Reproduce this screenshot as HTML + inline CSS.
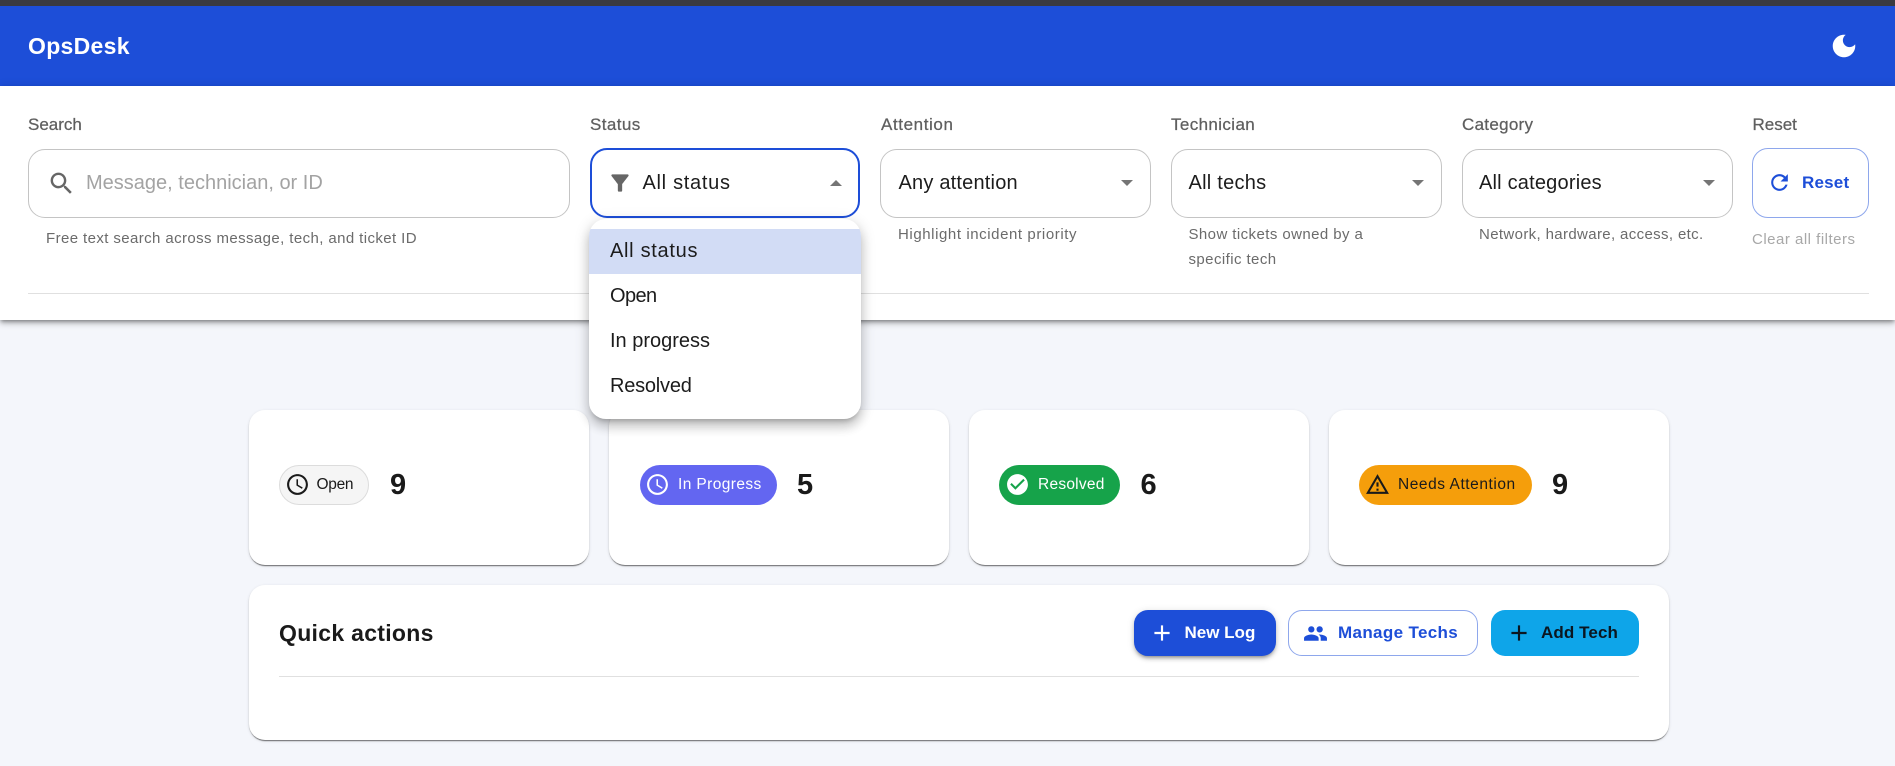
<!DOCTYPE html>
<html lang="en">
<head>
<meta charset="utf-8">
<title>OpsDesk</title>
<style>
html,body{margin:0;padding:0;width:1895px;height:766px;overflow:hidden;background:#f4f6fb;font-family:"Liberation Sans",Arial,sans-serif;color:#1a1a1a}
.a{position:absolute}
.t{position:absolute;white-space:nowrap;line-height:30px;height:30px}
svg{position:absolute;display:block}
.lab{font-size:17px;color:#5f5f5f;-webkit-text-stroke:.25px #5f5f5f}
.val{font-size:20px;color:#1c1c1c}
.hint{font-size:15px;color:#6b6b6b;letter-spacing:.4px}
.inp{position:absolute;top:149px;height:67px;border:1px solid #c4c4c4;border-radius:17px;background:#fff}
.arr{position:absolute;width:0;height:0;border-left:6px solid transparent;border-right:6px solid transparent}
.card{position:absolute;background:#fff;border-radius:16px;box-shadow:0 2px 1px -1px rgba(0,0,0,.38),0 1px 1px rgba(0,0,0,.2),0 1px 3px rgba(0,0,0,.12)}
.chip{position:absolute;top:465px;height:40px;border-radius:20px;box-sizing:border-box}
.chipt{font-size:15.5px}
.num{font-size:29px;font-weight:bold;color:#1a1a1a}
.btn{position:absolute;top:610px;height:46px;border-radius:14px;box-sizing:border-box}
.bt{font-size:17px;font-weight:bold}
.item{position:absolute;left:0;width:272px;height:45px;line-height:45px;font-size:20px;padding-left:21px;box-sizing:border-box;color:#1c1c1c}
</style>
</head>
<body>
<div class="a" style="left:0;top:0;width:1895px;height:6px;background:#3a3a40"></div>
<div class="a" style="left:0;top:6px;width:1895px;height:80px;background:#1d4ed8"></div>
<div class="t" style="left:28px;top:31px;font-size:23px;font-weight:bold;color:#fff;letter-spacing:.3px">OpsDesk</div>
<svg style="left:1829px;top:30.5px" width="30" height="30" viewBox="0 0 24 24" fill="#fff"><path d="M12 3c-4.97 0-9 4.03-9 9s4.03 9 9 9 9-4.03 9-9c0-.46-.04-.92-.1-1.36-.98 1.37-2.58 2.26-4.4 2.26-2.98 0-5.4-2.42-5.4-5.4 0-1.81.89-3.42 2.26-4.4-.44-.06-.9-.1-1.36-.1z"/></svg>

<!-- filter panel -->
<div class="a" style="left:0;top:86px;width:1895px;height:234px;background:#fff;box-shadow:0 2px 4px -1px rgba(0,0,0,.4),0 4px 5px rgba(0,0,0,.14),0 1px 10px rgba(0,0,0,.12)"></div>
<div class="a" style="left:28px;top:293px;width:1841px;height:1px;background:#e0e0e0"></div>

<div class="t lab" style="left:28px;top:110px">Search</div>
<div class="t lab" style="left:590px;top:110px;letter-spacing:.4px">Status</div>
<div class="t lab" style="left:881px;top:110px;letter-spacing:.6px">Attention</div>
<div class="t lab" style="left:1171px;top:110px;letter-spacing:.38px">Technician</div>
<div class="t lab" style="left:1462px;top:110px;letter-spacing:.29px">Category</div>
<div class="t lab" style="left:1752.5px;top:110px">Reset</div>

<div class="inp" style="left:28px;width:540px"></div>
<svg style="left:47px;top:168.5px" width="29" height="29" viewBox="0 0 24 24" fill="#666"><path d="M15.5 14h-.79l-.28-.27C15.41 12.59 16 11.11 16 9.5 16 5.91 13.09 3 9.5 3S3 5.91 3 9.5 5.91 16 9.5 16c1.61 0 3.09-.59 4.23-1.57l.27.28v.79l5 4.99L20.49 19l-4.99-5zm-6 0C7.01 14 5 11.99 5 9.5S7.01 5 9.5 5 14 7.01 14 9.5 11.99 14 9.5 14z"/></svg>
<div class="t val" style="left:86px;top:168px;color:#a3a3a3">Message, technician, or ID</div>
<div class="t hint" style="left:46px;top:224px">Free text search across message, tech, and ticket ID</div>

<div class="a" style="left:590px;top:148px;width:266px;height:66px;border:2px solid #1d4ed8;border-radius:17px;background:#fff"></div>
<svg style="left:607px;top:169.5px" width="26" height="26" viewBox="0 0 24 24" fill="#666"><path d="M4.25 5.61C6.27 8.2 10 13 10 13v6c0 .55.45 1 1 1h2c.55 0 1-.45 1-1v-6s3.72-4.8 5.74-7.39c.51-.66.04-1.61-.79-1.61H5.04c-.83 0-1.3.95-.79 1.61z"/></svg>
<div class="t val" style="left:642.5px;top:168px;letter-spacing:.7px">All status</div>
<div class="arr" style="left:830px;top:179.5px;border-bottom:6.5px solid #757575"></div>

<div class="inp" style="left:880px;width:269px"></div>
<div class="t val" style="left:898.5px;top:168px;letter-spacing:.2px">Any attention</div>
<div class="arr" style="left:1121px;top:180px;border-top:6.5px solid #757575"></div>
<div class="t hint" style="left:898px;top:220px;letter-spacing:.58px">Highlight incident priority</div>

<div class="inp" style="left:1171px;width:269px"></div>
<div class="t val" style="left:1188.5px;top:168px;letter-spacing:.25px">All techs</div>
<div class="arr" style="left:1412px;top:180px;border-top:6.5px solid #757575"></div>
<div class="t hint" style="left:1188.5px;top:220px;letter-spacing:.42px">Show tickets owned by a</div>
<div class="t hint" style="left:1188.5px;top:245px;letter-spacing:.42px">specific tech</div>

<div class="inp" style="left:1462px;width:269px"></div>
<div class="t val" style="left:1479px;top:168px;letter-spacing:.2px">All categories</div>
<div class="arr" style="left:1703px;top:180px;border-top:6.5px solid #757575"></div>
<div class="t hint" style="left:1479px;top:220px;letter-spacing:.36px">Network, hardware, access, etc.</div>

<div class="a" style="left:1752px;top:148px;width:115px;height:68px;border:1px solid #8ea7ec;border-radius:16px;background:#fff"></div>
<svg style="left:1767px;top:170px" width="25" height="25" viewBox="0 0 24 24" fill="#1d4ed8"><path d="M17.65 6.35C16.2 4.9 14.21 4 12 4c-4.42 0-7.99 3.58-7.99 8s3.57 8 7.99 8c3.73 0 6.84-2.55 7.73-6h-2.08c-.82 2.33-3.04 4-5.65 4-3.31 0-6-2.69-6-6s2.69-6 6-6c1.66 0 3.14.69 4.22 1.78L13 11h7V4l-2.35 2.35z"/></svg>
<div class="t" style="left:1802px;top:168px;font-size:17px;font-weight:bold;color:#1d4ed8;letter-spacing:.2px">Reset</div>
<div class="t hint" style="left:1752px;top:225px;color:#a8a8a8;letter-spacing:.5px">Clear all filters</div>

<!-- stat cards -->
<div class="card" style="left:249px;top:410px;width:340px;height:155px"></div>
<div class="card" style="left:609px;top:410px;width:340px;height:155px"></div>
<div class="card" style="left:969px;top:410px;width:340px;height:155px"></div>
<div class="card" style="left:1329px;top:410px;width:340px;height:155px"></div>

<div class="chip" style="left:279px;width:90px;background:#f5f5f5;border:1px solid #dcdcdc"></div>
<svg style="left:285px;top:472px" width="25" height="25" viewBox="0 0 24 24" fill="#1a1a1a"><path d="M11.99 2C6.47 2 2 6.48 2 12s4.47 10 9.99 10C17.52 22 22 17.52 22 12S17.52 2 11.99 2zM12 20c-4.42 0-8-3.58-8-8s3.58-8 8-8 8 3.58 8 8-3.58 8-8 8zm.5-13H11v6l5.25 3.15.75-1.23-4.5-2.67z"/></svg>
<div class="t chipt" style="left:316.5px;top:470px;color:#1a1a1a;letter-spacing:-.3px">Open</div>
<div class="t num" style="left:390px;top:470px">9</div>

<div class="chip" style="left:639.5px;width:137px;background:#6366f1"></div>
<svg style="left:645px;top:472px" width="25" height="25" viewBox="0 0 24 24" fill="#fff"><path d="M11.99 2C6.47 2 2 6.48 2 12s4.47 10 9.99 10C17.52 22 22 17.52 22 12S17.52 2 11.99 2zM12 20c-4.42 0-8-3.58-8-8s3.58-8 8-8 8 3.58 8 8-3.58 8-8 8zm.5-13H11v6l5.25 3.15.75-1.23-4.5-2.67z"/></svg>
<div class="t chipt" style="left:678px;top:470px;color:#fff;letter-spacing:.4px">In Progress</div>
<div class="t num" style="left:797px;top:470px">5</div>

<div class="chip" style="left:999px;width:121px;background:#16a34a"></div>
<svg style="left:1005px;top:472px" width="25" height="25" viewBox="0 0 24 24" fill="#fff"><path d="M12 2C6.48 2 2 6.48 2 12s4.48 10 10 10 10-4.48 10-10S17.52 2 12 2zm-2 15l-5-5 1.41-1.41L10 14.17l7.59-7.59L19 8l-9 9z"/></svg>
<div class="t chipt" style="left:1038px;top:470px;color:#fff;letter-spacing:.25px">Resolved</div>
<div class="t num" style="left:1140.5px;top:470px">6</div>

<div class="chip" style="left:1359px;width:173px;background:#f59e0b"></div>
<svg style="left:1365px;top:472px" width="25" height="25" viewBox="0 0 24 24" fill="#1a1a1a"><path d="M12 5.99L19.53 19H4.47L12 5.99M12 2L1 21h22L12 2zm1 14h-2v2h2v-2zm0-6h-2v4h2v-4z"/></svg>
<div class="t chipt" style="left:1398px;top:470px;color:#1a1a1a;letter-spacing:.55px">Needs Attention</div>
<div class="t num" style="left:1552px;top:470px">9</div>

<!-- quick actions -->
<div class="card" style="left:249px;top:585px;width:1420px;height:155px"></div>
<div class="t" style="left:279px;top:618px;font-size:23px;font-weight:bold;letter-spacing:.3px;color:#1a1a1a">Quick actions</div>
<div class="a" style="left:279px;top:676px;width:1360px;height:1px;background:#e0e0e0"></div>

<div class="btn" style="left:1134px;width:142px;background:#1d4ed8;box-shadow:0 3px 3px -2px rgba(0,0,0,.3),0 3px 4px rgba(0,0,0,.16),0 1px 8px rgba(0,0,0,.12)"></div>
<svg style="left:1148.5px;top:620px" width="26" height="26" viewBox="0 0 24 24" fill="#fff"><path d="M19 13h-6v6h-2v-6H5v-2h6V5h2v6h6v2z"/></svg>
<div class="t bt" style="left:1184.5px;top:618px;color:#fff">New Log</div>

<div class="btn" style="left:1288px;width:190px;background:#fff;border:1px solid #8ea7ec"></div>
<svg style="left:1303px;top:620.5px" width="25" height="25" viewBox="0 0 24 24" fill="#1d4ed8"><path d="M16 11c1.66 0 2.99-1.34 2.99-3S17.66 5 16 5c-1.66 0-3 1.34-3 3s1.34 3 3 3zm-8 0c1.66 0 2.99-1.34 2.99-3S9.66 5 8 5C6.34 5 5 6.34 5 8s1.34 3 3 3zm0 2c-2.33 0-7 1.17-7 3.5V19h14v-2.5c0-2.33-4.67-3.5-7-3.5zm8 0c-.29 0-.62.02-.97.05 1.16.84 1.97 1.97 1.97 3.45V19h6v-2.5c0-2.33-4.67-3.5-7-3.5z"/></svg>
<div class="t bt" style="left:1338px;top:618px;color:#1d4ed8;letter-spacing:.35px">Manage Techs</div>

<div class="btn" style="left:1491px;width:148px;background:#0ea5e9"></div>
<svg style="left:1505.5px;top:620px" width="26" height="26" viewBox="0 0 24 24" fill="#0b1620"><path d="M19 13h-6v6h-2v-6H5v-2h6V5h2v6h6v2z"/></svg>
<div class="t bt" style="left:1541px;top:618px;color:#0b1620;letter-spacing:.1px">Add Tech</div>

<!-- dropdown menu -->
<div class="a" style="left:589px;top:219px;width:272px;height:200px;background:#fff;border-radius:17px;box-shadow:0 5px 5px -3px rgba(0,0,0,.2),0 8px 10px 1px rgba(0,0,0,.14),0 3px 14px 2px rgba(0,0,0,.12);overflow:hidden">
<div class="item" style="top:10px;background:#d2dcf5;letter-spacing:.7px">All status</div>
<div class="item" style="top:55px;letter-spacing:-.6px">Open</div>
<div class="item" style="top:100px">In progress</div>
<div class="item" style="top:145px;letter-spacing:-.22px">Resolved</div>
</div>
</body>
</html>
